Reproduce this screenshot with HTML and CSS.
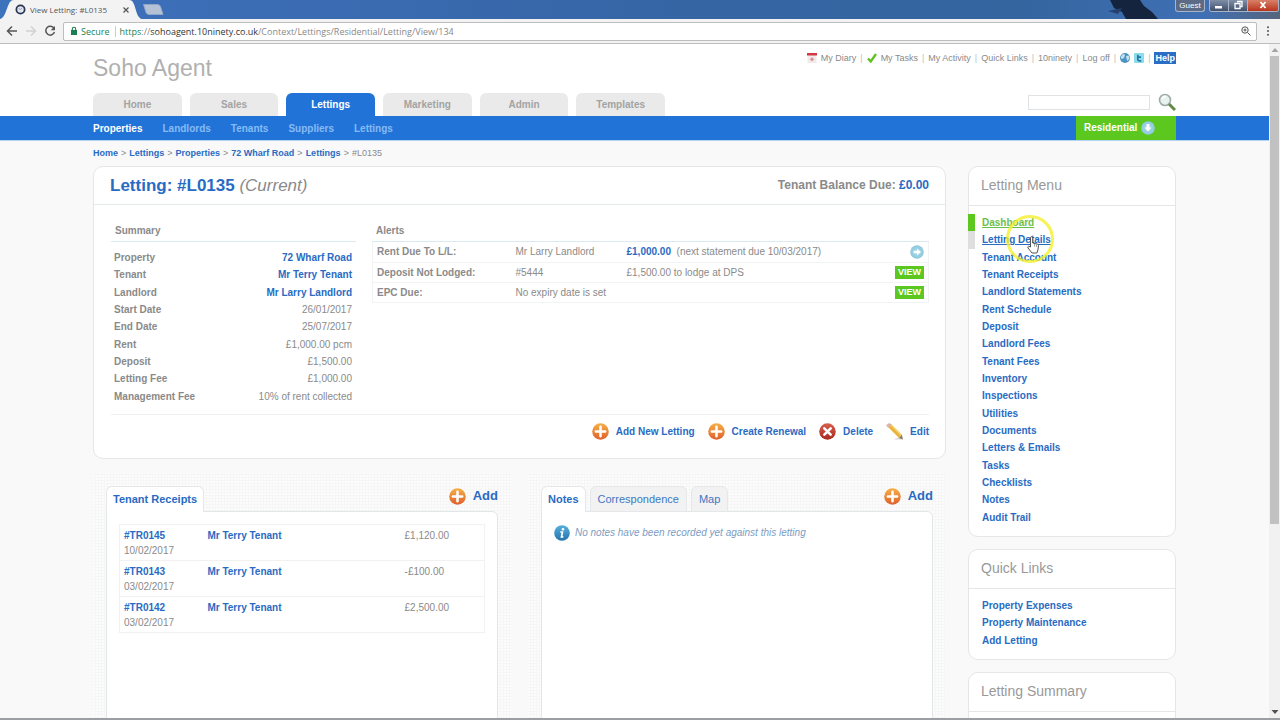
FILE: index.html
```html
<!DOCTYPE html>
<html lang="en">
<head>
<meta charset="utf-8">
<title>View Letting: #L0135</title>
<link rel="stylesheet" href="styles.css">
</head>
<body>
<svg class="defs" aria-hidden="true">
  <defs>
    <linearGradient id="orange" x1="0" y1="0" x2="0" y2="1"><stop offset="0" stop-color="#f6b046"/><stop offset="1" stop-color="#df5f2c"/></linearGradient>
    <linearGradient id="red" x1="0" y1="0" x2="0" y2="1"><stop offset="0" stop-color="#d8604c"/><stop offset="1" stop-color="#a82a20"/></linearGradient>
    <linearGradient id="blue" x1="0" y1="0" x2="0" y2="1"><stop offset="0" stop-color="#55b0dc"/><stop offset="1" stop-color="#2573ae"/></linearGradient>
    <radialGradient id="aqua"><stop offset="0" stop-color="#a6daea"/><stop offset="1" stop-color="#8fc8dc"/></radialGradient>
    <symbol id="plus" viewBox="0 0 16 16"><circle cx="8" cy="8" r="7.8" fill="url(#orange)"/><path d="M8 3.6v8.8M3.6 8h8.8" stroke="#fff" stroke-width="2.4" stroke-linecap="round"/></symbol>
  </defs>
</svg>

<div class="titlebar">
  <svg class="wallpaper" viewBox="0 0 80 19" aria-hidden="true"><path d="M10 0h30l4 6 8 6 6 7H26l-4-7-8-4z" fill="#14243f"/><path d="M22 8L8 11l10 3z" fill="#25406c"/></svg>
  <div class="browser-tab">
    <svg class="tab-shape" viewBox="0 0 142 19" preserveAspectRatio="none" aria-hidden="true"><path d="M0 19C6 18 7 4 11 1Q12 0 14 0H129Q131 0 132 1C136 5 136 18 142 19z" fill="#f3f3f4"/></svg>
    <svg class="favicon" viewBox="0 0 12 12" aria-hidden="true"><circle cx="6" cy="6" r="4.5" fill="#dfe6f0" stroke="#2a3350" stroke-width="1.9"/><path d="M4 5l2 1 2-2" stroke="#8d99b5" fill="none"/></svg>
    <span class="tab-title">View Letting: #L0135</span>
    <button class="tab-close" aria-label="Close tab"><svg viewBox="0 0 6 6"><path d="M.5.5l5 5M5.500.5l-5 5" stroke="#555" stroke-width="1.200"/></svg></button>
  </div>
  <button class="new-tab" aria-label="New tab"><svg viewBox="0 0 22 11"><path d="M1.500.5h14q2 0 3 2l2.500 8H7q-2 0-3-2z" fill="#b5c2d6" stroke="#91a6c8"/></svg></button>
  <div class="window-buttons">
    <button class="guest">Guest</button>
    <div class="win-group">
      <button class="win" aria-label="Minimise"><svg viewBox="0 0 12 10"><path d="M2 6h7v2.500H2z" fill="#fff"/></svg></button>
      <button class="win" aria-label="Restore"><svg viewBox="0 0 12 10"><path d="M5 1.500h5v5H8M3 3.500h5v5H3z" fill="none" stroke="#fff" stroke-width="1.300"/></svg></button>
      <button class="win win-close" aria-label="Close"><svg viewBox="0 0 12 10"><path d="M3.500 2l5 6M8.500 2l-5 6" stroke="#fff" stroke-width="1.800"/></svg></button>
    </div>
  </div>
</div>

<div class="toolbar">
  <button class="tool" aria-label="Back"><svg viewBox="0 0 12 12"><path d="M11 6H2M6 1.500L1.500 6 6 10.500" fill="none" stroke="#555" stroke-width="1.500"/></svg></button>
  <button class="tool" aria-label="Forward"><svg viewBox="0 0 12 12"><path d="M1 6h9M6 1.500L10.500 6 6 10.500" fill="none" stroke="#d2d2d2" stroke-width="1.500"/></svg></button>
  <button class="tool" aria-label="Reload"><svg viewBox="0 0 12 12"><path d="M10 3.500A4.400 4.400 0 1 0 10.400 7" fill="none" stroke="#555" stroke-width="1.500"/><path d="M11 1v4.300H6.700z" fill="#555"/></svg></button>
  <div class="omnibox">
    <svg class="lock" viewBox="0 0 8 10" aria-hidden="true"><path d="M1 4h6v5H1z" fill="#1b7f4f"/><path d="M2.300 4.500V3a1.700 1.700 0 0 1 3.400 0v1.500" fill="none" stroke="#1b7f4f" stroke-width="1.100"/></svg>
    <span class="secure">Secure</span>
    <span class="url"><span class="scheme">https</span>://<b>sohoagent.10ninety.co.uk</b>/Context/Lettings/Residential/Letting/View/134</span>
    <svg class="zoom-icon" viewBox="0 0 10 10" aria-hidden="true"><circle cx="4" cy="4" r="3.200" fill="none" stroke="#555"/><path d="M6.500 6.500l3 3M2.500 4h3M4 2.500v3" stroke="#555"/></svg>
  </div>
  <button class="kebab" aria-label="Menu"><svg viewBox="0 0 4 10"><g fill="#555"><circle cx="2" cy="1.200" r="1"/><circle cx="2" cy="5" r="1"/><circle cx="2" cy="8.800" r="1"/></g></svg></button>
</div>

<div class="viewport">
<div class="page">
  <header class="header wrap">
    <div class="brand-col">
      <div class="brand">Soho Agent</div>
      <nav class="tabs">
        <a href="#">Home</a><a href="#">Sales</a><a href="#" class="on">Lettings</a><a href="#">Marketing</a><a href="#">Admin</a><a href="#">Templates</a>
      </nav>
    </div>
    <div class="tools-col">
      <div class="top-links">
        <svg class="ico10" viewBox="0 0 10 10" aria-hidden="true"><path d="M.5 2h9v8h-9z" fill="#f1e9ea"/><path d="M0 0h10v2.500H0z" fill="#cf3a45"/><circle cx="5" cy="6.200" r="1.700" fill="#d9949b"/></svg>
        <a href="#">My Diary</a><i>|</i>
        <svg class="ico10" viewBox="0 0 10 10" aria-hidden="true"><path d="M1 5.500L3.700 8.500 9 1" fill="none" stroke="#5cc21d" stroke-width="2.300"/></svg>
        <a href="#">My Tasks</a><i>|</i>
        <a href="#">My Activity</a><i>|</i>
        <a href="#">Quick Links</a><i>|</i>
        <a href="#">10ninety</a><i>|</i>
        <a href="#">Log off</a><i>|</i>
        <svg class="ico10" viewBox="0 0 10 10" aria-hidden="true"><circle cx="5" cy="5" r="5" fill="#4b93c2"/><path d="M1.500 2.500Q4 0 5 2L4 5 2 6Q0 5 1.500 2.500M6 3l3-.5.5 3L7.500 8 6.500 6z" fill="#bfe2ee"/></svg>
        <svg class="ico10" viewBox="0 0 10 10" aria-hidden="true"><rect width="10" height="10" rx="1" fill="#8ddcec"/><path d="M3.800 1.800V6.500Q3.800 7.800 5.200 7.800H7.300M3.800 4.200H7" fill="none" stroke="#2478a4" stroke-width="1.700"/></svg>
        <i>|</i>
        <a href="#" class="help">Help</a>
      </div>
      <form class="search">
        <input type="search" aria-label="Search">
        <button type="button" aria-label="Search"><svg viewBox="0 0 18 18"><circle cx="7" cy="7" r="5.500" fill="#e6f3ee" stroke="#a3aaaa" stroke-width="1.600"/><path d="M4 6q1-3 4-2.500" fill="none" stroke="#fff" stroke-width="1.500"/><path d="M11 11l6 6" stroke="#63894a" stroke-width="3"/></svg></button>
      </form>
    </div>
  </header>

  <nav class="subnav">
    <div class="wrap subnav-in">
      <a href="#" class="on">Properties</a><a href="#">Landlords</a><a href="#">Tenants</a><a href="#">Suppliers</a><a href="#">Lettings</a>
      <button class="context">Residential <svg viewBox="0 0 14 14" aria-hidden="true"><circle cx="7" cy="7" r="6.800" fill="url(#aqua)"/><path d="M7 3v4" stroke="#fff" stroke-width="3"/><path d="M3.500 6.500h7L7 10.500z" fill="#fff"/></svg></button>
    </div>
  </nav>

  <div class="wrap crumbs"><a href="#">Home</a><i>&gt;</i><a href="#">Lettings</a><i>&gt;</i><a href="#">Properties</a><i>&gt;</i><a href="#">72 Wharf Road</a><i>&gt;</i><a href="#">Lettings</a><i>&gt;</i>#L0135</div>

  <div class="wrap columns">
    <main class="main">
      <section class="card">
        <div class="card-head">
          <h1>Letting: #L0135 <em>(Current)</em></h1>
          <div class="balance">Tenant Balance Due: <a href="#">£0.00</a></div>
        </div>
        <div class="card-body">
          <div class="info">
            <div class="summary">
              <h2>Summary</h2>
              <table>
                <tr><th>Property</th><td><a href="#">72 Wharf Road</a></td></tr>
                <tr><th>Tenant</th><td><a href="#">Mr Terry Tenant</a></td></tr>
                <tr><th>Landlord</th><td><a href="#">Mr Larry Landlord</a></td></tr>
                <tr><th>Start Date</th><td>26/01/2017</td></tr>
                <tr><th>End Date</th><td>25/07/2017</td></tr>
                <tr><th>Rent</th><td>£1,000.00 pcm</td></tr>
                <tr><th>Deposit</th><td>£1,500.00</td></tr>
                <tr><th>Letting Fee</th><td>£1,000.00</td></tr>
                <tr><th>Management Fee</th><td>10% of rent collected</td></tr>
              </table>
            </div>
            <div class="alerts">
              <h2>Alerts</h2>
              <table>
                <tr><th>Rent Due To L/L:</th><td class="who">Mr Larry Landlord</td><td><a href="#">£1,000.00</a> &nbsp;(next statement due 10/03/2017)</td><td class="act"><button class="go" aria-label="Open"><svg viewBox="0 0 14 14"><circle cx="7" cy="7" r="6.800" fill="url(#aqua)"/><path d="M3.500 7h4" stroke="#fff" stroke-width="2.600"/><path d="M7 3.500v7L11 7z" fill="#fff"/></svg></button></td></tr>
                <tr><th>Deposit Not Lodged:</th><td>#5444</td><td>£1,500.00 to lodge at DPS</td><td class="act"><button class="view">VIEW</button></td></tr>
                <tr><th>EPC Due:</th><td>No expiry date is set</td><td></td><td class="act"><button class="view">VIEW</button></td></tr>
              </table>
            </div>
          </div>
          <div class="actions">
            <a href="#"><svg viewBox="0 0 16 16"><use href="#plus"/></svg>Add New Letting</a>
            <a href="#"><svg viewBox="0 0 16 16"><use href="#plus"/></svg>Create Renewal</a>
            <a href="#"><svg viewBox="0 0 16 16"><circle cx="8" cy="8" r="7.800" fill="url(#red)"/><path d="M5 5l6 6M11 5l-6 6" stroke="#fff" stroke-width="2.400" stroke-linecap="round"/></svg>Delete</a>
            <a href="#"><svg viewBox="0 0 16 16"><path d="M7 15.500h9l-4-2z" fill="#d9d9d9"/><path d="M3.500 2.500L13.500 12.500" stroke="#eab43a" stroke-width="4"/><path d="M4.500 1.500L14.500 11.500" stroke="#f7d978" stroke-width="1.200"/><path d="M0 2L3 0l2.300 1.500-3.300 3z" fill="#dcb3a8"/><path d="M12 14l3-3 1 4.500z" fill="#8d7a60"/></svg>Edit</a>
          </div>
        </div>
      </section>

      <div class="modules">
        <section class="module">
          <div class="module-head">
            <div class="module-tabs"><button class="on">Tenant Receipts</button></div>
            <a href="#" class="add"><svg viewBox="0 0 16 16"><use href="#plus"/></svg>Add</a>
          </div>
          <div class="panel">
            <table class="receipts">
              <tr><td><a href="#">#TR0145</a><br>10/02/2017</td><td><a href="#">Mr Terry Tenant</a></td><td>£1,120.00</td></tr>
              <tr><td><a href="#">#TR0143</a><br>03/02/2017</td><td><a href="#">Mr Terry Tenant</a></td><td>-£100.00</td></tr>
              <tr><td><a href="#">#TR0142</a><br>03/02/2017</td><td><a href="#">Mr Terry Tenant</a></td><td>£2,500.00</td></tr>
            </table>
          </div>
        </section>
        <section class="module">
          <div class="module-head">
            <div class="module-tabs"><button class="on">Notes</button><button>Correspondence</button><button>Map</button></div>
            <a href="#" class="add"><svg viewBox="0 0 16 16"><use href="#plus"/></svg>Add</a>
          </div>
          <div class="panel">
            <p class="empty"><svg viewBox="0 0 16 16" aria-hidden="true"><circle cx="8" cy="8" r="7.800" fill="url(#blue)"/><circle cx="9" cy="4.300" r="1.300" fill="#fff"/><path d="M6.300 7h2.200l-1 4.800h1.800" fill="none" stroke="#fff" stroke-width="1.700"/></svg>No notes have been recorded yet against this letting</p>
          </div>
        </section>
      </div>
    </main>

    <aside class="side">
      <section class="card">
        <h3>Letting Menu</h3>
        <ul class="menu menu-main">
          <li class="current"><a href="#">Dashboard</a></li>
          <li class="hovered"><a href="#">Letting Details</a>
            <span class="ring"></span>
            <svg class="hand" viewBox="0 0 12 18" aria-hidden="true"><path d="M3.500 11V2q0-1.400 1.100-1.400T5.700 2v5l5 1.200q.9.400.8 1.500l-.6 4.300-1 3H5L1 12q-.6-1.400.6-1.800z" fill="#fff" stroke="#444" stroke-width=".9"/><path d="M7.500 8v2.500M9.400 8.500V11" stroke="#777" stroke-width=".7"/></svg>
          </li>
          <li><a href="#">Tenant Account</a></li>
          <li><a href="#">Tenant Receipts</a></li>
          <li><a href="#">Landlord Statements</a></li>
          <li><a href="#">Rent Schedule</a></li>
          <li><a href="#">Deposit</a></li>
          <li><a href="#">Landlord Fees</a></li>
          <li><a href="#">Tenant Fees</a></li>
          <li><a href="#">Inventory</a></li>
          <li><a href="#">Inspections</a></li>
          <li><a href="#">Utilities</a></li>
          <li><a href="#">Documents</a></li>
          <li><a href="#">Letters &amp; Emails</a></li>
          <li><a href="#">Tasks</a></li>
          <li><a href="#">Checklists</a></li>
          <li><a href="#">Notes</a></li>
          <li><a href="#">Audit Trail</a></li>
        </ul>
      </section>
      <section class="card">
        <h3>Quick Links</h3>
        <ul class="menu menu-quick">
          <li><a href="#">Property Expenses</a></li>
          <li><a href="#">Property Maintenance</a></li>
          <li><a href="#">Add Letting</a></li>
        </ul>
      </section>
      <section class="card">
        <h3>Letting Summary</h3>
        <ul class="menu menu-quick"></ul>
      </section>
    </aside>
  </div>
</div>
<div class="scrollbar" aria-hidden="true">
  <svg viewBox="0 0 8 4"><path d="M4 0l3.500 4h-7z" fill="#a3a3a3"/></svg>
  <div class="track"><div class="thumb"></div></div>
  <svg viewBox="0 0 8 4"><path d="M.5 0h7L4 4z" fill="#505050"/></svg>
</div>
</div>
<div class="desk-edge"></div>
</body>
</html>
```

FILE: styles.css
```css
* { box-sizing: border-box; }
body {
  margin: 0;
  height: 100vh;
  display: flex;
  flex-direction: column;
  overflow: hidden;
  background: #fff;
  color: #8a8a8a;
  font: 10px/17px "Liberation Sans", Arial, sans-serif;
}
a { color: #296bc3; text-decoration: none; font-weight: bold; }
button { font: inherit; color: inherit; background: none; border: 0; padding: 0; margin: 0; }
svg { display: block; flex: none; }
h1, h2, h3, ul, p { margin: 0; padding: 0; }
table { border-collapse: collapse; }
th { text-align: left; }
.defs { position: absolute; width: 0; height: 0; }

/* Browser frame */
.titlebar {
  position: relative;
  display: flex;
  height: 19px;
  flex: none;
  background: linear-gradient(90deg, #3d72bd 0, #3a6ab0 30%, #3565a3 55%, #35659f 80%, #3f70b5 94%, #56657c 100%);
}
.wallpaper { position: absolute; right: 100px; top: 0; width: 80px; height: 19px; }
.browser-tab {
  position: relative;
  display: flex;
  align-items: center;
  width: 142px;
  padding-left: 15px;
}
.tab-shape { position: absolute; left: 0; top: 0; width: 100%; height: 19px; }
.favicon { position: relative; width: 11px; height: 11px; }
.tab-title { position: relative; margin-left: 4px; font: 8px/19px "Open Sans", "Noto Sans", sans-serif; color: #555; flex: 1; white-space: nowrap; }
.tab-close { position: relative; margin-right: 13px; }
.tab-close svg { width: 6px; height: 6px; }
.new-tab { align-self: center; }
.new-tab svg { width: 22px; height: 11px; }
.window-buttons { position: relative; display: flex; gap: 4px; margin-left: auto; height: 12px; color: #fff; }
.guest { width: 30px; border: 1px solid #a9b4c8; border-top: 0; border-radius: 0 0 3px 3px; background: #5b6b85; font-size: 8px; line-height: 11px; }
.win-group { display: flex; border: 1px solid #a9b4c8; border-top: 0; border-radius: 0 0 3px 3px; overflow: hidden; margin-right: 1px; }
.win { width: 19px; display: flex; justify-content: center; background: linear-gradient(#7f8fa8, #40506c); border-right: 1px solid #a9b4c8; }
.win-close { width: 30px; border: 0; background: linear-gradient(#d98068, #b9341c); }
.win svg { width: 12px; height: 10px; }
.toolbar {
  display: flex;
  align-items: center;
  gap: 7px;
  height: 25px;
  flex: none;
  padding: 0 8px 0 6px;
  background: #f1f2f1;
  border-bottom: 1px solid #bdbdbd;
}
.tool svg { width: 12px; height: 12px; }
.omnibox {
  flex: 1;
  display: flex;
  align-items: center;
  height: 19px;
  padding: 0 5px 0 6px;
  border: 1px solid #bdbdbd;
  border-radius: 2px;
  background: #fff;
  font: 9px/17px "Open Sans", "Noto Sans", sans-serif;
}
.lock { width: 8px; height: 10px; }
.secure { color: #1b7f4f; margin-left: 3px; padding-right: 5px; border-right: 1px solid #ccc; line-height: 11px; }
.url { margin-left: 4px; color: #888; flex: 1; }
.url b { font-weight: normal; color: #333; }
.scheme { color: #1b7f4f; }
.zoom-icon { width: 10px; height: 10px; }
.kebab svg { width: 4px; height: 10px; }
.kebab { padding: 0 2px; }

/* Page and scrollbar */
.viewport { flex: 1; min-height: 0; display: flex; }
.page { flex: 1; min-width: 0; overflow: hidden; background: #f9f9f9; }
.wrap { padding-left: 93px; padding-right: 93px; }
.scrollbar { width: 11px; display: flex; flex-direction: column; align-items: center; gap: 4px; padding: 4px 1px; background: #f1f1f1; }
.scrollbar svg { width: 8px; height: 4px; }
.track { flex: 1; width: 100%; }
.thumb { height: 72%; background: #c1c1c1; }
.desk-edge { height: 2px; flex: none; background: #9b9fa3; }

/* Header */
.header { display: flex; justify-content: space-between; height: 72px; background: #fff; }
.brand-col { flex: 0 1 572px; display: flex; flex-direction: column; justify-content: space-between; }
.brand { padding-top: 11px; font-size: 23px; line-height: 26px; color: #b0b0b0; }
.tabs { display: grid; grid-template-columns: repeat(6, 1fr); gap: 8px; }
.tabs a { height: 23px; line-height: 23px; border-radius: 6px 6px 0 0; text-align: center; background: #eaeaea; color: #a3a3a3; }
.tabs .on { background: #2273d8; color: #fff; }
.tools-col { display: flex; flex-direction: column; align-items: flex-end; justify-content: space-between; padding: 6px 0 5px; }
.top-links { display: flex; align-items: center; gap: 4px; font-size: 9px; line-height: 16px; }
.top-links a { font-weight: normal; color: #8a8a8a; }
.top-links i { font-style: normal; color: #c0c0c0; }
.top-links .help { padding: 0 1px; background: #2a6dc4; color: #fff; font-weight: bold; line-height: 12px; }
.ico10 { width: 10px; height: 10px; }
.search { display: flex; align-items: center; gap: 8px; }
.search input { width: 122px; height: 15px; border: 1px solid #dfe3e6; background: #fff; padding: 0 3px; font: inherit; }
.search svg { width: 18px; height: 18px; }
.subnav { background: #2273d8; border-bottom: 1px solid #b5d3f2; }
.subnav-in { display: flex; gap: 20px; height: 24px; line-height: 26px; }
.subnav a { color: #85bbf5; }
.subnav .on { color: #fff; }
.context { display: flex; align-items: center; gap: 4px; width: 100px; padding-left: 8px; margin-left: auto; background: #5cc81f; color: #fff; font-weight: bold; }
.context svg { width: 14px; height: 14px; }
.crumbs { padding-top: 3px; font-size: 9px; line-height: 18px; }
.crumbs i { margin: 0 3px; font-style: normal; }

/* Cards */
.columns { display: flex; gap: 22px; padding-top: 4px; }
.main { flex: 1; min-width: 0; }
.side { width: 208px; display: flex; flex-direction: column; gap: 12px; }
.card { border: 1px solid #e6e6e6; border-radius: 10px; background: #fff; }
.card-head { display: flex; justify-content: space-between; align-items: center; height: 38px; padding: 0 16px; border-bottom: 1px solid #e4e9ec; }
h1 { font-size: 17px; color: #296bc3; }
h1 em { font-weight: normal; color: #8a8a8a; }
.balance { font-size: 12px; font-weight: bold; }
.card-body { padding: 17px 16px 18px 17px; }
.info { display: flex; gap: 16px; }
.summary { width: 245px; }
.alerts { flex: 1; }
h2 { padding: 0 4px 2px; font-size: 10px; line-height: 17px; border-bottom: 1px solid #dbe9f1; }
.summary table { width: 100%; height: 156px; margin-top: 7px; }
.summary th, .summary td { padding: 0 4px 0 3px; }
.summary td { text-align: right; }
.alerts table { width: 100%; border: 1px solid #f0f2f3; border-top: 0; }
.alerts tr { height: 20px; border-bottom: 1px solid #f2f3f4; }
.alerts th, .alerts td { padding: 0 4px; }
.alerts th { width: 139px; }
.alerts .who { width: 111px; }
.alerts .act { text-align: right; line-height: 0; }
.act button { vertical-align: middle; }
.go svg { width: 14px; height: 14px; }
.view { width: 29px; background: #5cc81f; color: #fff; font-size: 9px; font-weight: bold; line-height: 13px; }
.actions { display: flex; justify-content: flex-end; gap: 13px; margin-top: 9px; padding-top: 8px; border-top: 1px solid #f0f0f0; }
.actions a { display: flex; align-items: center; gap: 7px; }
.actions svg, .add svg { width: 17px; height: 17px; }

/* Tabbed modules */
.modules { display: grid; grid-template-columns: 1fr 1fr; gap: 17px; padding-top: 15px; }
.module {
  padding: 12px 13px;
  background:
    repeating-linear-gradient(0deg, #ffffff00 0 2px, #f6f6f6 2px 3px),
    repeating-linear-gradient(90deg, #fcfcfc 0 2px, #f6f6f6 2px 3px);
}
.module-head { display: flex; justify-content: space-between; align-items: flex-start; }
.module-tabs { display: flex; gap: 4px; }
.module-tabs button { height: 26px; padding: 0 7px; margin-bottom: -1px; border: 1px solid #e4e8ea; border-radius: 6px 6px 0 0; background: #f2f2f2; color: #3f77c2; font-size: 11px; }
.module-tabs .on { position: relative; z-index: 1; padding: 0 6px; border-bottom: 0; background: #fff; color: #296bc3; font-weight: bold; }
.add { display: flex; align-items: center; gap: 7px; font-size: 13px; line-height: 20px; }
.panel { min-height: 260px; padding: 12px; border: 1px solid #e1e6e9; border-radius: 0 6px 0 0; background: #fff; }
.receipts { width: 100%; border: 1px solid #f1f1f1; line-height: 15px; }
.receipts tr { height: 36px; border-bottom: 1px solid #f1f1f1; }
.receipts td { padding: 3px 4px 2px; vertical-align: top; width: 23%; }
.receipts td + td { width: 54%; }
.receipts td + td + td { width: 23%; }
.empty { display: flex; align-items: center; gap: 5px; line-height: 18px; font-style: italic; color: #7c9dc4; }
.empty svg { width: 16px; height: 16px; }

/* Side menus */
h3 { height: 39px; padding: 0 12px; font-size: 14px; font-weight: normal; line-height: 37px; border-bottom: 1px solid #e6e6e6; color: #999; }
.menu { display: grid; grid-auto-rows: 1fr; list-style: none; margin: 8px 0 10px -1px; }
.menu-main { min-height: 312px; }
.menu-quick { min-height: 52px; }
.menu li { position: relative; padding-left: 7px; border-left: 7px solid transparent; }
.menu .current { border-color: #5cc81f; }
.menu .current a { color: #6cc04a; text-decoration: underline; }
.menu .hovered { border-color: #dedede; }
.menu .hovered a { text-decoration: underline; }
.ring { position: absolute; z-index: 1; left: 31px; top: -16px; width: 48px; height: 48px; border: 3px solid #f3f02ccc; border-radius: 50%; }
.hand { position: absolute; z-index: 2; left: 52px; top: 5px; width: 12px; height: 18px; }
```
